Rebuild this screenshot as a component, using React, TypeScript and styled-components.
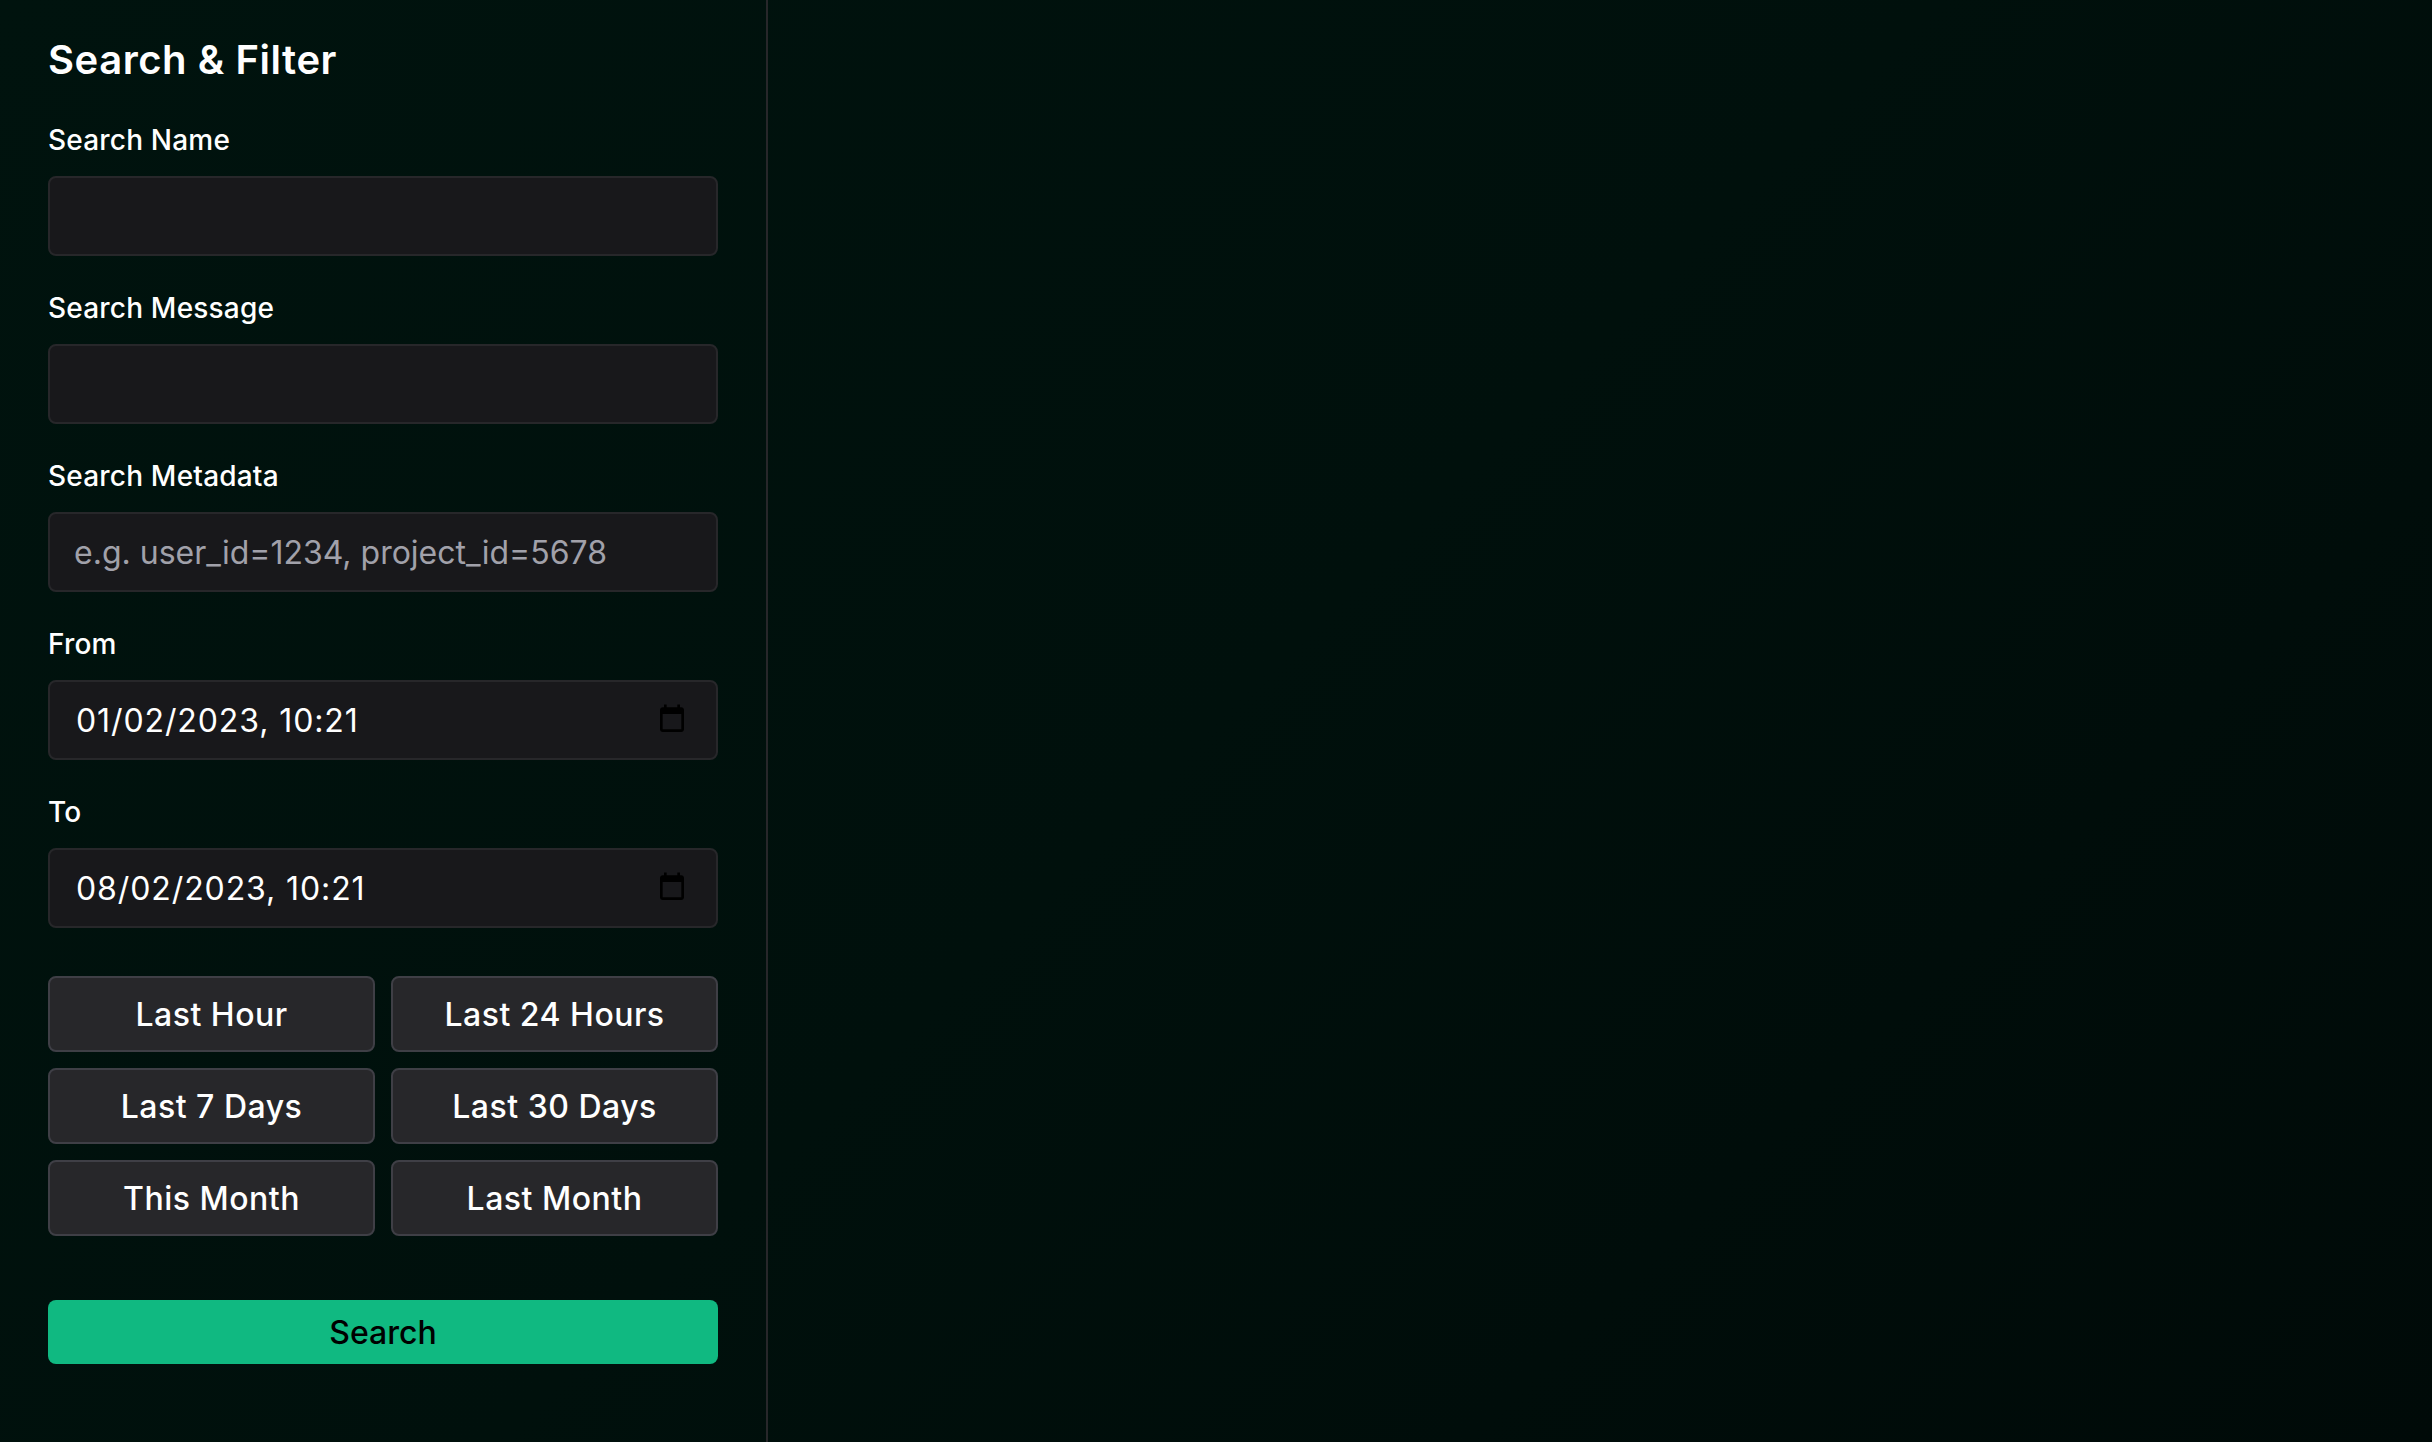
import React from 'react'
import styled, { createGlobalStyle } from 'styled-components'

const GlobalStyle = createGlobalStyle`
  html, body {
    margin: 0;
    height: 100%;
    background: #000d0a;
  }
  * {
    box-sizing: border-box;
  }
`

const Page = styled.div`
  display: flex;
  width: 100%;
  height: 1442px;
  overflow: hidden;
  font-family: Inter, "Liberation Sans", sans-serif;
  color: #fff;
  background: linear-gradient(135deg, #00130e 0%, #00100c 50%, #000a08 100%);
`

const Sidebar = styled.aside`
  width: 768px;
  height: 100%;
  padding: 32px 48px;
  border-right: 2px solid #27272a;
  flex-shrink: 0;
`

const Title = styled.h2`
  margin: 0 0 32px;
  font-size: 40px;
  line-height: 56px;
  font-weight: 600;
  letter-spacing: 0.55px;
`

const Form = styled.form`
  display: flex;
  flex-direction: column;
  gap: 32px;
`

const Field = styled.div`
  display: flex;
  flex-direction: column;
  gap: 16px;
`

const Label = styled.label`
  font-size: 28px;
  line-height: 40px;
  font-weight: 450;
  letter-spacing: 0.2px;
`

const InputBox = styled.div`
  display: flex;
  align-items: center;
  height: 80px;
  padding: 1px 28px 0 26px;
  background: #18181b;
  border: 2px solid #27272a;
  border-radius: 8px;
`

const TextInput = styled.input`
  flex: 1;
  min-width: 0;
  padding: 0;
  border: 0;
  outline: 0;
  background: transparent;
  color: #fff;
  font: 400 32px/48px Inter, "Liberation Sans", sans-serif;
  letter-spacing: 0.9px;

  &:placeholder-shown {
    margin-left: -2px;
    letter-spacing: 0;
  }

  &::placeholder {
    color: #a1a1aa;
    opacity: 1;
  }
`

const CalendarIcon = styled.svg`
  width: 32px;
  height: 33px;
  margin-top: -3px;
  flex-shrink: 0;
  fill: #000;
`

const Presets = styled.div`
  display: grid;
  grid-template-columns: 1fr 1fr;
  gap: 16px;
  margin-top: 16px;
`

const PresetButton = styled.button`
  height: 76px;
  padding: 2px 0 0;
  background: #27272a;
  border: 2px solid #3f3f46;
  border-radius: 8px;
  color: #fff;
  font: 450 32px/48px Inter, "Liberation Sans", sans-serif;
  letter-spacing: 0.5px;
`

const SearchButton = styled.button`
  height: 64px;
  margin-top: 32px;
  padding: 2px 0 0;
  background: #10b981;
  border: 0;
  border-radius: 8px;
  color: #000;
  font: 550 32px/48px Inter, "Liberation Sans", sans-serif;
`

const PRESETS = ['Last Hour', 'Last 24 Hours', 'Last 7 Days', 'Last 30 Days', 'This Month', 'Last Month']

const Calendar = () => (
  <CalendarIcon viewBox="0 0 24 24" preserveAspectRatio="none">
    <path d="M19 3h-1V1h-2v2H8V1H6v2H5c-1.11 0-1.99.9-1.99 2L3 19c0 1.1.89 2 2 2h14c1.1 0 2-.9 2-2V5c0-1.1-.9-2-2-2zm0 16H5V8h14v11z" />
  </CalendarIcon>
)

const App = () => (
  <Page>
    <GlobalStyle />
    <Sidebar>
      <Title>Search &amp; Filter</Title>
      <Form onSubmit={(e) => e.preventDefault()}>
        <Field>
          <Label>Search Name</Label>
          <InputBox>
            <TextInput type="text" />
          </InputBox>
        </Field>
        <Field>
          <Label>Search Message</Label>
          <InputBox>
            <TextInput type="text" />
          </InputBox>
        </Field>
        <Field>
          <Label>Search Metadata</Label>
          <InputBox>
            <TextInput type="text" placeholder="e.g. user_id=1234, project_id=5678" />
          </InputBox>
        </Field>
        <Field>
          <Label>From</Label>
          <InputBox>
            <TextInput type="text" defaultValue="01/02/2023, 10:21" />
            <Calendar />
          </InputBox>
        </Field>
        <Field>
          <Label>To</Label>
          <InputBox>
            <TextInput type="text" defaultValue="08/02/2023, 10:21" />
            <Calendar />
          </InputBox>
        </Field>
        <Presets>
          {PRESETS.map((p) => (
            <PresetButton type="button" key={p}>
              {p}
            </PresetButton>
          ))}
        </Presets>
        <SearchButton type="submit">Search</SearchButton>
      </Form>
    </Sidebar>
  </Page>
)

export default App
